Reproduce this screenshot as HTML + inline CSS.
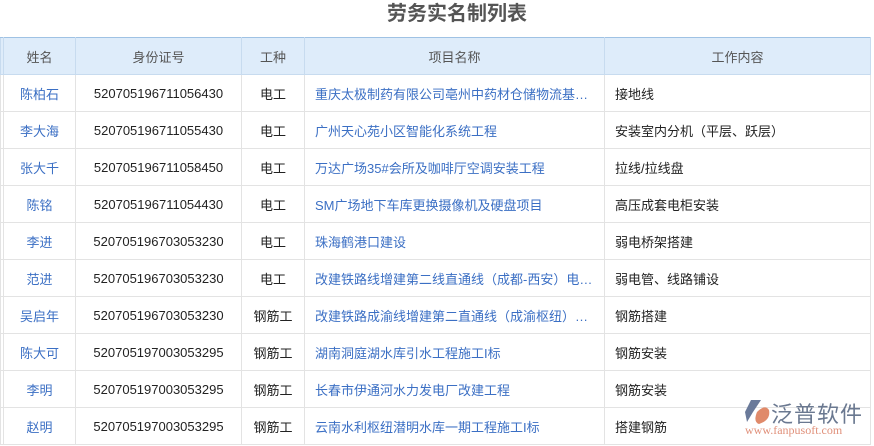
<!DOCTYPE html>
<html><head><meta charset="utf-8"><style>
body{margin:0;width:874px;height:446px;overflow:hidden;background:#fff;font-family:"Liberation Sans","Noto Sans CJK SC",sans-serif;position:relative}
.t{position:absolute;top:1px;left:0;width:874px;text-align:center;font-size:20px;font-weight:bold;color:#555;line-height:26px;padding-left:40px;box-sizing:border-box}
table{position:absolute;top:37px;left:0;border-collapse:collapse;font-size:13px;table-layout:fixed}
td,th{height:36px;border:1px solid #e3e3e3;padding:0;white-space:nowrap;overflow:hidden}
th{background:#deecfa;color:#555;font-weight:normal;border-color:#c7dbef;border-top:1px solid #9fc2e4}
td{color:#222}
.c{text-align:center}.b{color:#3b6fc4}
.p{padding-left:10px;text-overflow:ellipsis}
.logo{position:absolute;left:743px;top:398px}
</style></head><body>
<div class="t">劳务实名制列表</div>
<table>
<colgroup><col style="width:3px"><col style="width:72px"><col style="width:166px"><col style="width:63px"><col style="width:300px"><col style="width:266px"></colgroup>
<tr><th></th><th>姓名</th><th>身份证号</th><th>工种</th><th>项目名称</th><th>工作内容</th></tr>
<tr><td></td><td class="c b">陈柏石</td><td class="c">520705196711056430</td><td class="c">电工</td><td class="p b">重庆太极制药有限公司亳州中药材仓储物流基…</td><td class="p">接地线</td></tr>
<tr><td></td><td class="c b">李大海</td><td class="c">520705196711055430</td><td class="c">电工</td><td class="p b">广州天心苑小区智能化系统工程</td><td class="p">安装室内分机（平层、跃层）</td></tr>
<tr><td></td><td class="c b">张大千</td><td class="c">520705196711058450</td><td class="c">电工</td><td class="p b">万达广场35#会所及咖啡厅空调安装工程</td><td class="p">拉线/拉线盘</td></tr>
<tr><td></td><td class="c b">陈铭</td><td class="c">520705196711054430</td><td class="c">电工</td><td class="p b">SM广场地下车库更换摄像机及硬盘项目</td><td class="p">高压成套电柜安装</td></tr>
<tr><td></td><td class="c b">李进</td><td class="c">520705196703053230</td><td class="c">电工</td><td class="p b">珠海鹤港口建设</td><td class="p">弱电桥架搭建</td></tr>
<tr><td></td><td class="c b">范进</td><td class="c">520705196703053230</td><td class="c">电工</td><td class="p b">改建铁路线增建第二线直通线（成都-西安）电…</td><td class="p">弱电管、线路铺设</td></tr>
<tr><td></td><td class="c b">吴启年</td><td class="c">520705196703053230</td><td class="c">钢筋工</td><td class="p b">改建铁路成渝线增建第二直通线（成渝枢纽）…</td><td class="p">钢筋搭建</td></tr>
<tr><td></td><td class="c b">陈大可</td><td class="c">520705197003053295</td><td class="c">钢筋工</td><td class="p b">湖南洞庭湖水库引水工程施工I标</td><td class="p">钢筋安装</td></tr>
<tr><td></td><td class="c b">李明</td><td class="c">520705197003053295</td><td class="c">钢筋工</td><td class="p b">长春市伊通河水力发电厂改建工程</td><td class="p">钢筋安装</td></tr>
<tr><td></td><td class="c b">赵明</td><td class="c">520705197003053295</td><td class="c">钢筋工</td><td class="p b">云南水利枢纽潜明水库一期工程施工I标</td><td class="p">搭建钢筋</td></tr>
</table>
<div class="logo">
<svg width="30" height="30" viewBox="0 0 30 30" style="position:absolute;left:0;top:0"><path d="M8 2 L18 2 L10 14 L4 24 L2 14Z" fill="#6a7a9a"/><path d="M14 14 Q22 6 26 12 Q28 22 16 26 Q10 24 14 14Z" fill="#e08a6a"/></svg>
<div style="position:absolute;left:28px;top:-1px;font-size:22px;color:#6a7890;letter-spacing:1px;white-space:nowrap">泛普软件</div>
<div style="position:absolute;left:2px;top:25px;font-size:12px;color:#e0907a;font-family:'Liberation Serif',serif;white-space:nowrap">www.fanpusoft.com</div>
</div>
</body></html>
